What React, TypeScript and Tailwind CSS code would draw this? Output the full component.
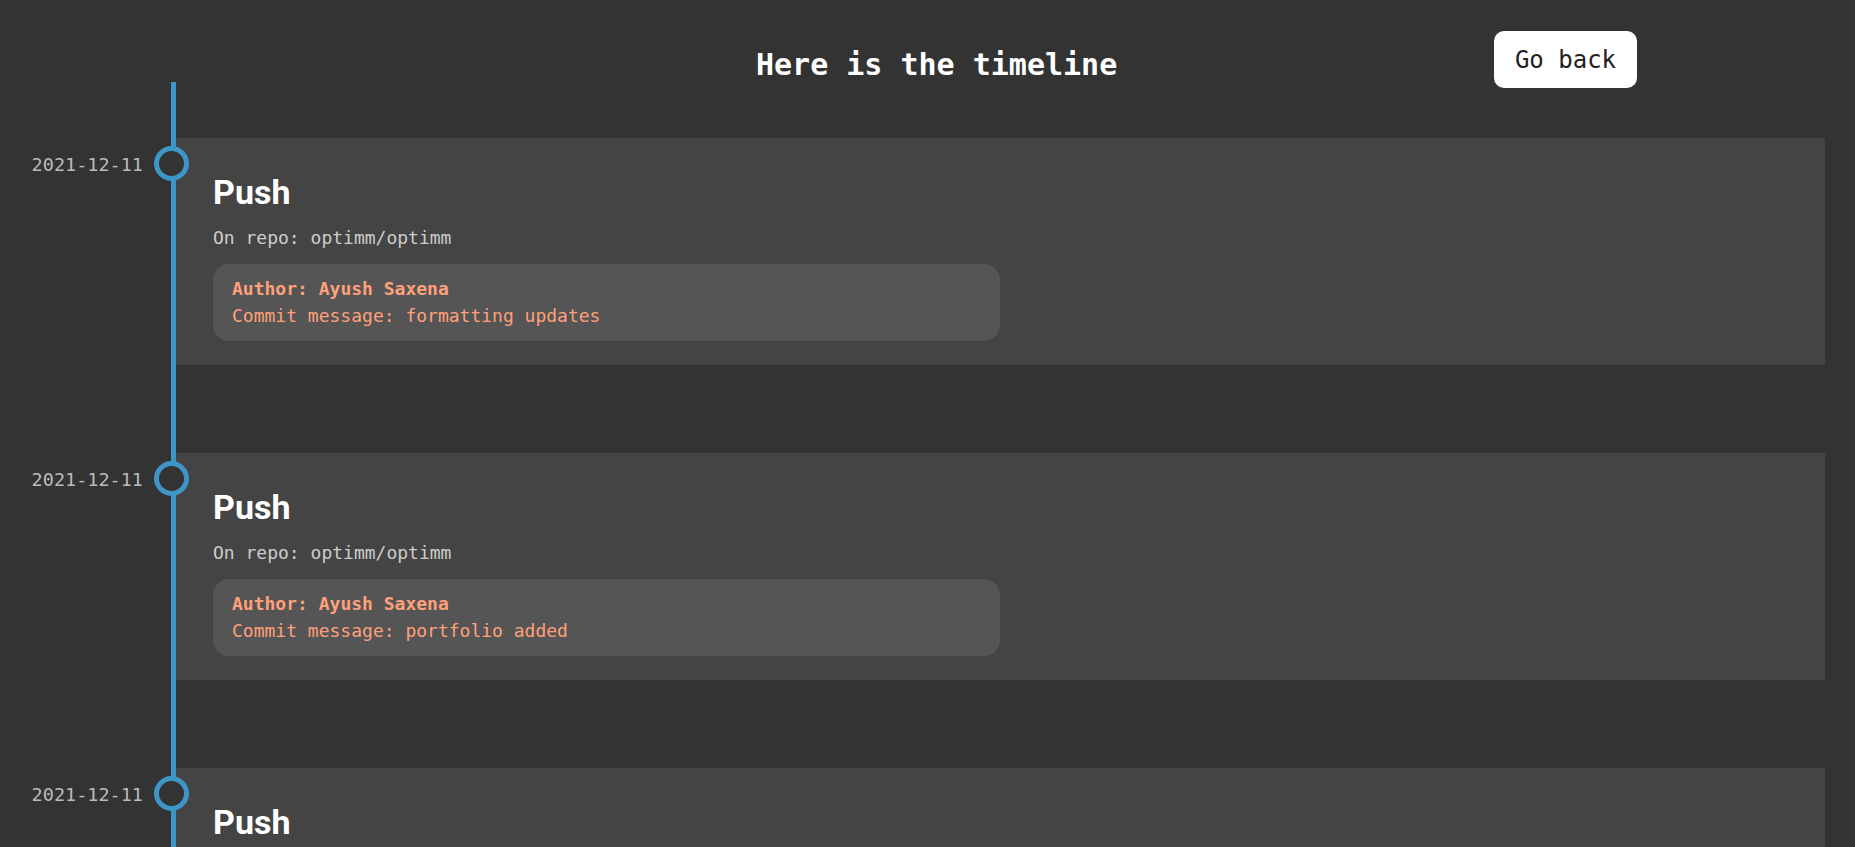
import React from "react";

type EventItem = {
  date: string;
  type: string;
  repo: string;
  author: string;
  message: string;
};

const events: EventItem[] = [
  {
    date: "2021-12-11",
    type: "Push",
    repo: "optimm/optimm",
    author: "Ayush Saxena",
    message: "formatting updates",
  },
  {
    date: "2021-12-11",
    type: "Push",
    repo: "optimm/optimm",
    author: "Ayush Saxena",
    message: "portfolio added",
  },
  {
    date: "2021-12-11",
    type: "Push",
    repo: "optimm/optimm",
    author: "Ayush Saxena",
    message: "initial commit",
  },
];

const mono = "font-['DejaVu_Sans_Mono',monospace]";

function TimelineCard({ item }: { item: EventItem }) {
  return (
    <div className="relative bg-[#444444] pl-[37px] pr-8 pt-[34px] pb-[24px]">
      <span
        className={`${mono} absolute right-full top-[15px] mr-[33px] whitespace-nowrap text-[18.5px] leading-[24px] text-[#bbbbbb]`}
      >
        {item.date}
      </span>
      <span className="absolute left-[-22px] top-[8px] h-[35px] w-[35px] rounded-full border-[5px] border-[#3d96c7] bg-[#333333]" />
      <h2 className="font-['Roboto',sans-serif] text-[34px] font-bold leading-[40px] text-white">
        {item.type}
      </h2>
      <p
        className={`${mono} mt-[14px] text-[18px] leading-[24px] text-[#cccccc]`}
      >
        On repo: {item.repo}
      </p>
      <div
        className={`${mono} mt-[14px] w-[787px] rounded-2xl bg-[#555555] pl-[19px] pt-[11px] pb-[12px] text-[18px] leading-[27px] text-[#ffa07a]`}
      >
        <p className="font-bold">Author: {item.author}</p>
        <p>Commit message: {item.message}</p>
      </div>
    </div>
  );
}

export default function App() {
  return (
    <div className="min-h-screen overflow-hidden bg-[#333333]">
      <header className="flex h-[82px] items-start">
        <h1
          className={`${mono} ml-[756px] mt-[47px] text-[30px] font-bold leading-[36px] text-white`}
        >
          Here is the timeline
        </h1>
        <button
          className={`${mono} ml-auto mr-[218px] mt-[31px] flex h-[57px] w-[143px] items-center justify-center rounded-[10px] bg-white pt-[2px] text-[24px] leading-[33px] text-[#222222]`}
        >
          Go back
        </button>
      </header>
      <div className="ml-[171px] mr-[30px] flex flex-col gap-[88px] border-l-[5px] border-[#3d96c7] pt-[56px] pb-10">
        {events.map((item, i) => (
          <TimelineCard key={i} item={item} />
        ))}
      </div>
    </div>
  );
}
